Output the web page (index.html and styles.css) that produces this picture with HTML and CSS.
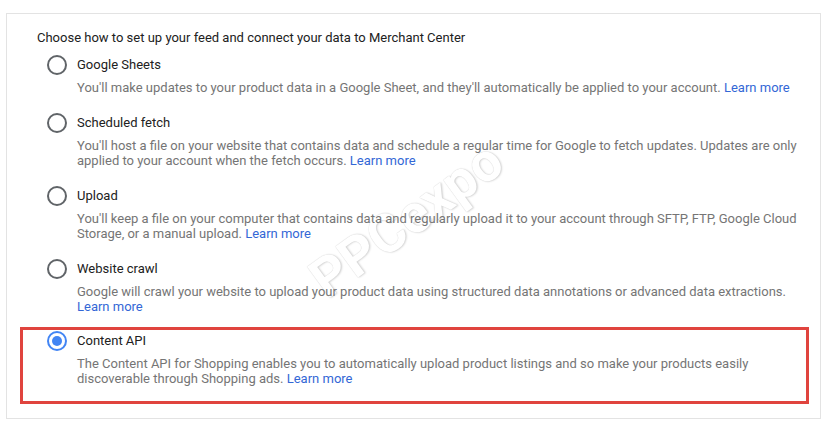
FILE: index.html
```html
<!DOCTYPE html>
<html>
<head lang="en">
    <meta charset="UTF-8">
    <title>Feed setup</title>
    <link rel="stylesheet" href="styles.css">
</head>
<body>

<div class="page">
    <div class="card">
        <!-- 标题 -->
        <p class="heading">Choose how to set up your feed and connect your data to Merchant Center</p>

        <ul class="options">
            <li class="option">
                <span class="radio"></span>
                <div class="text">
                    <div class="label">Google Sheets</div>
                    <div class="desc">You'll make updates to your product data in a Google Sheet, and they'll automatically be applied to your account. <a href="#">Learn more</a></div>
                </div>
            </li>
            <li class="option">
                <span class="radio"></span>
                <div class="text">
                    <div class="label">Scheduled fetch</div>
                    <div class="desc">You'll host a file on your website that contains data and schedule a regular time for Google to fetch updates. Updates are only applied to your account when the fetch occurs. <a href="#">Learn more</a></div>
                </div>
            </li>
            <li class="option">
                <span class="radio"></span>
                <div class="text">
                    <div class="label">Upload</div>
                    <div class="desc">You'll keep a file on your computer that contains data and regularly upload it to your account through SFTP, FTP, Google Cloud Storage, or a manual upload. <a href="#">Learn more</a></div>
                </div>
            </li>
            <li class="option">
                <span class="radio"></span>
                <div class="text">
                    <div class="label">Website crawl</div>
                    <div class="desc">Google will crawl your website to upload your product data using structured data annotations or advanced data extractions. <a href="#">Learn more</a></div>
                </div>
            </li>
        </ul>

        <!-- 选中的选项，外面加红框 -->
        <div class="highlight">
            <div class="option">
                <span class="radio checked"></span>
                <div class="text">
                    <div class="label">Content API</div>
                    <div class="desc">The Content API for Shopping enables you to automatically upload product listings and so make your products easily discoverable through Shopping ads. <a href="#">Learn more</a></div>
                </div>
            </div>
        </div>

        <!-- 水印 -->
        <span class="watermark">PPCexpo</span>
    </div>
</div>

</body>
</html>
```

FILE: styles.css
```css
* {
    margin: 0;
    padding: 0;
}

li {
    list-style: none;
}

body {
    background: #fff;
    font-family: Roboto, "Liberation Sans", Arial, sans-serif;
    font-size: 13px;
}

.page {
    padding: 13px 0 0 6px;
}

.card {
    position: relative;
    z-index: 0;
    width: 813px;
    height: 404px;
    border: 1px solid #e3e3e3;
    overflow: hidden;
}

.heading {
    margin: 14px 0 0 30px;
    line-height: 20px;
    color: #212121;
}

.options {
    margin: 7px 0 0 40px;
    width: 760px;
}

.option {
    display: flex;
    gap: 10px;
    margin-bottom: 18px;
}

.radio {
    flex: none;
    position: relative;
    width: 16px;
    height: 16px;
    border: 2px solid #606468;
    border-radius: 50%;
}

.radio.checked {
    border-color: #4285f4;
}

.radio.checked::after {
    content: "";
    position: absolute;
    left: 3px;
    top: 3px;
    width: 10px;
    height: 10px;
    border-radius: 50%;
    background: #4285f4;
}

.label {
    line-height: 20px;
    color: #212121;
}

.desc {
    margin-top: 5px;
    line-height: 15px;
    color: #757575;
}

.desc a {
    color: #3367d6;
    text-decoration: none;
}

.highlight {
    margin: -5px 11px 0 13px;
    border: 3px solid #e0443e;
    padding: 1px 0 15px 24px;
}

.highlight .option {
    margin-bottom: 0;
    width: 736px;
}

.watermark {
    position: absolute;
    z-index: -1;
    left: 288px;
    top: 174px;
    transform: rotate(-36deg);
    font-size: 54px;
    font-weight: bold;
    color: #fff;
    text-shadow: 0 0 1px #c4c4c4, 1px 1px 2px #d8d8d8;
    pointer-events: none;
}
```
